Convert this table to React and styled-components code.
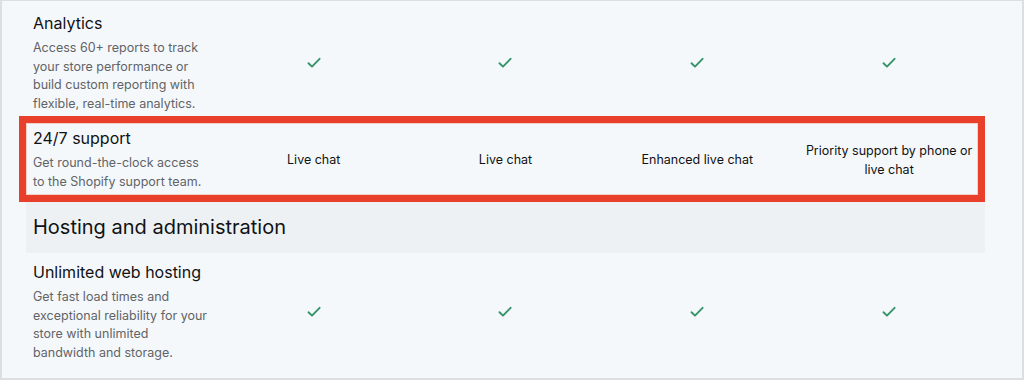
import React from 'react'
import styled, { createGlobalStyle } from 'styled-components'

const features = [
  {
    title: 'Analytics',
    text: 'Access 60+ reports to track your store performance or build custom reporting with flexible, real-time analytics.',
    plans: [true, true, true, true],
    pad: '12px 0 3px',
  },
  {
    title: '24/7 support',
    text: 'Get round-the-clock access to the Shopify support team.',
    plans: ['Live chat', 'Live chat', 'Enhanced live chat', 'Priority support by phone or live chat'],
    pad: '12px 0 11px',
    marked: true,
  },
]

const hosting = [
  {
    title: 'Unlimited web hosting',
    text: 'Get fast load times and exceptional reliability for your store with unlimited bandwidth and storage.',
    plans: [true, true, true, true],
    pad: '9px 0 14px',
  },
]

function Check() {
  return (
    <svg width="14" height="12" viewBox="0 0 14 12" fill="none">
      <path d="M1.5 6.2 L5 9.6 L12.6 1.8" stroke="#35936b" strokeWidth="1.9" strokeLinecap="round" strokeLinejoin="round" />
    </svg>
  )
}

function FeatureRow({ item }) {
  return (
    <Row $pad={item.pad}>
      <Feature>
        <Title>{item.title}</Title>
        <Desc>{item.text}</Desc>
      </Feature>
      {item.plans.map((p, i) => (
        <Cell key={i}>{p === true ? <Check /> : p}</Cell>
      ))}
      {item.marked && <Highlight />}
    </Row>
  )
}

export default function App() {
  return (
    <>
      <GlobalStyle />
      <Frame>
        <Table>
          {features.map((f) => (
            <FeatureRow key={f.title} item={f} />
          ))}
          <SectionHead>Hosting and administration</SectionHead>
          {hosting.map((f) => (
            <FeatureRow key={f.title} item={f} />
          ))}
        </Table>
      </Frame>
    </>
  )
}

const GlobalStyle = createGlobalStyle`
  html, body {
    margin: 0;
    padding: 0;
    background: #f5f8fb;
  }
  body {
    font-family: Inter, "Noto Sans", sans-serif;
    -webkit-font-smoothing: antialiased;
  }
`

const Frame = styled.div`
  width: 1024px;
  height: 380px;
  box-sizing: border-box;
  border: 2px solid #dcdfe2;
  border-top-width: 1px;
  background: #f5f8fb;
  overflow: hidden;
`

const Table = styled.div`
  width: 959px;
  margin-left: 24px;
`

const Row = styled.div`
  position: relative;
  display: grid;
  grid-template-columns: repeat(5, 1fr);
  align-items: center;
  padding: ${(p) => p.$pad};
`

const Feature = styled.div`
  padding: 0 7px;
  max-width: 178px;
`

const Title = styled.div`
  font-size: 16px;
  line-height: 20px;
  color: #111213;
  margin-bottom: 6px;
`

const Desc = styled.div`
  font-size: 12.5px;
  line-height: 18.5px;
  color: #616467;
`

const Cell = styled.div`
  display: flex;
  justify-content: center;
  text-align: center;
  padding: 0 8px;
  font-size: 12.5px;
  line-height: 19px;
  color: #111213;
`

const SectionHead = styled.div`
  height: 51px;
  display: flex;
  align-items: center;
  padding: 0 7px 1px;
  box-sizing: border-box;
  background: #edf1f4;
  font-size: 20px;
  color: #111213;
`

const Highlight = styled.div`
  position: absolute;
  top: 0;
  bottom: 0;
  left: -7px;
  right: 0;
  border: 7px solid #e8402a;
  box-shadow: inset 0 0 0 1px #f6cfc7;
  pointer-events: none;
`
